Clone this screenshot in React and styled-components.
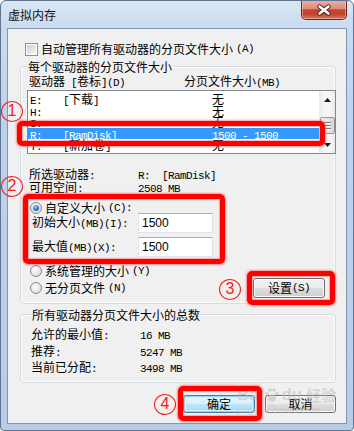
import React from 'react';
import styled, { createGlobalStyle, css } from 'styled-components';

const GlobalStyle = createGlobalStyle`
  html, body {
    margin: 0;
    padding: 0;
    background: #ffffff;
  }
  body {
    font-family: "Noto Sans CJK SC", "Noto Sans", sans-serif;
    font-size: 12px;
    color: #000;
  }
`;

// ---- window chrome ----
const Window = styled.div`
  position: relative;
  width: 354px;
  height: 431px;
  box-sizing: border-box;
  border: 1px solid #5f7591;
  border-radius: 6px 6px 4px 4px;
  padding: 0 6px 6px 6px;
  display: flex;
  flex-direction: column;
  overflow: hidden;
  background: linear-gradient(180deg, #d9e6f3 0px, #c9dbef 26px, #bed2ea 120px, #b7cde7 100%);
`;

const TitleBar = styled.div`
  height: 27px;
  display: flex;
  justify-content: space-between;
  align-items: flex-start;
  flex-shrink: 0;
`;

const TitleText = styled.div`
  margin: 7px 0 0 1px;
  line-height: 14px;
  font-size: 12px;
  color: #111;
`;

const CloseButton = styled.div`
  width: 46px;
  height: 20px;
  margin-top: -1px;
  box-sizing: border-box;
  border: 1px solid #6e2a20;
  border-top: none;
  border-radius: 0 0 5px 5px;
  display: flex;
  align-items: center;
  justify-content: center;
  background: linear-gradient(180deg, #eab1a4 0%, #dd8c7b 45%, #c7432c 52%, #c4442d 75%, #d8775f 100%);
  box-shadow: inset 0 0 0 1px rgba(255, 220, 210, 0.45);
`;

const Client = styled.div`
  flex: 1;
  box-sizing: border-box;
  border: 1px solid #8296b2;
  background: #f0f0f0;
  padding: 0 10px 0 12px;
  display: flex;
  flex-direction: column;
`;

// ---- text helpers (latin runs get the narrow fixed-width face) ----
const Mono = styled.span`
  font-family: "Liberation Mono", "DejaVu Sans Mono", monospace;
  font-size: 11px;
  letter-spacing: -0.6px;
  white-space: pre;
`;

const Txt = ({ children }) =>
  String(children)
    .split(/([\x20-\x7e]+)/)
    .filter(Boolean)
    .map((part, i) => (/^[\x20-\x7e]+$/.test(part) ? <Mono key={i}>{part}</Mono> : <span key={i}>{part}</span>));

// ---- controls ----
const CheckRow = styled.div`
  margin-top: 13px;
  height: 14px;
  display: flex;
  align-items: center;
  gap: 3px;
  padding-left: 5px;
  line-height: 14px;
`;

const CheckBox = styled.span`
  width: 13px;
  height: 13px;
  box-sizing: border-box;
  border: 1px solid #8e8f8f;
  box-shadow: inset 0 0 0 1px #fff;
  background: linear-gradient(135deg, #cdcdcd, #f7f7f7);
`;

const GroupBox = styled.fieldset`
  margin: ${({ $top }) => $top}px 0 0 0;
  padding: ${({ $pad }) => $pad};
  border: 1px solid #d5dbe0;
  border-radius: 3px;
  box-shadow: inset 0 0 0 1px rgba(255, 255, 255, 0.7);
  min-width: 0;
`;

const Legend = styled.legend`
  padding: 0 1px;
  line-height: 13px;
  font-size: 12px;
`;

const ColumnHeader = styled.div`
  display: grid;
  grid-template-columns: 155px 1fr;
  padding-left: 2px;
  height: 12px;
  line-height: 12px;
`;

const ListBox = styled.div`
  margin: 3px -1px 0 0;
  height: 64px;
  box-sizing: border-box;
  border: 1px solid #828790;
  background: #fff;
  display: flex;
`;

const ListRows = styled.div`
  flex: 1;
  padding-top: 2px;
  overflow: hidden;
`;

const ListRow = styled.div`
  display: grid;
  grid-template-columns: 33px 149px 1fr;
  height: 11.5px;
  line-height: 11.5px;
  padding-left: 2px;
  white-space: nowrap;
  ${({ $selected }) =>
    $selected &&
    css`
      background: #3399ff;
      color: #fff;
    `}
`;

const ScrollBar = styled.div`
  width: 16px;
  display: flex;
  flex-direction: column;
  align-items: center;
  background: linear-gradient(90deg, #e9e9e9, #f6f6f6 30%, #f6f6f6 70%, #e9e9e9);
`;

const ScrollArrow = styled.div`
  height: 17px;
  width: 16px;
  display: flex;
  align-items: center;
  justify-content: center;
`;

const ScrollThumb = styled.div`
  margin-top: 9px;
  width: 15px;
  height: 17px;
  box-sizing: border-box;
  border: 1px solid #959595;
  border-radius: 2px;
  background: linear-gradient(90deg, #f3f3f3, #e6e6e6 50%, #d6d6d6);
  display: flex;
  flex-direction: column;
  align-items: center;
  justify-content: center;
  gap: 2px;
  & > i {
    display: block;
    width: 7px;
    height: 1px;
    background: #7a7a7a;
    box-shadow: 0 1px 0 #fff;
  }
`;

const InfoGrid = styled.div`
  margin-top: ${({ $top }) => $top}px;
  display: grid;
  grid-template-columns: 109px auto;
  grid-auto-rows: ${({ $row }) => $row}px;
  align-items: center;
  padding-left: ${({ $left }) => $left}px;
  line-height: 12px;
`;

const RadioRow = styled.div`
  margin-top: ${({ $top }) => $top || 0}px;
  height: ${({ $h }) => $h || 14}px;
  display: flex;
  align-items: center;
  gap: 3px;
  padding-left: 3px;
  line-height: 12px;
`;

const Radio = styled.span`
  position: relative;
  width: 12px;
  height: 12px;
  box-sizing: border-box;
  border-radius: 50%;
  border: 1px solid #8a8a8a;
  background: radial-gradient(circle at 40% 35%, #ffffff 0%, #e4e4e4 60%, #cfcfcf 100%);
  ${({ $checked }) =>
    $checked &&
    css`
      &::after {
        content: '';
        position: absolute;
        inset: 2px;
        border-radius: 50%;
        background: radial-gradient(circle at 40% 35%, #a9dcff 0%, #3b8bd2 40%, #16457f 100%);
      }
    `}
`;

const InputRow = styled.div`
  margin-top: ${({ $top }) => $top}px;
  display: grid;
  grid-template-columns: 106px 75px;
  align-items: center;
  padding-left: 5px;
  height: 20px;
  line-height: 12px;
`;

const TextInput = styled.div`
  height: 20px;
  box-sizing: border-box;
  border: 1px solid #e2e3ea;
  border-top-color: #abadb3;
  background: #fff;
  padding-left: 3px;
  display: flex;
  align-items: center;
  font-family: "Liberation Sans", Arial, sans-serif;
  font-size: 12px;
`;

const BottomRow = styled.div`
  margin-top: 7px;
  display: flex;
  justify-content: space-between;
  align-items: flex-start;
`;

const RadioColumn = styled.div`
  display: flex;
  flex-direction: column;
  gap: 3px;
`;

const Button = styled.div`
  width: ${({ $w }) => $w}px;
  height: ${({ $h }) => $h}px;
  margin: ${({ $m }) => $m || 0};
  box-sizing: border-box;
  border: 1px solid #707070;
  border-radius: 3px;
  display: flex;
  align-items: center;
  justify-content: center;
  line-height: 12px;
  background: linear-gradient(180deg, #f2f2f2 0%, #ebebeb 48%, #dddddd 52%, #cfcfcf 100%);
  box-shadow: inset 0 0 0 1px #fbfbfb;
  ${({ $default }) =>
    $default &&
    css`
      border-color: #3c7fb1;
      background: linear-gradient(180deg, #eaf6fd 0%, #d9f0fc 48%, #bee6fd 52%, #a7d9f5 100%);
      box-shadow: inset 0 0 0 1px #8fd6f6, inset 0 0 0 2px #d8f2fc;
    `}
`;

const ButtonRow = styled.div`
  margin-top: 12px;
  display: flex;
  justify-content: flex-end;
  gap: 10px;
`;

// ---- annotation overlay ----
const Mark = styled.div`
  position: absolute;
  left: ${({ $x }) => $x}px;
  top: ${({ $y }) => $y}px;
  width: ${({ $w }) => $w}px;
  height: ${({ $h }) => $h}px;
  box-sizing: border-box;
  border: 5px solid #ff0000;
  border-radius: 5px;
  box-shadow: 0 0 2px 1px rgba(255, 60, 60, 0.55), inset 0 0 1px 1px rgba(255, 60, 60, 0.4);
  pointer-events: none;
`;

const Badge = styled.div`
  position: absolute;
  left: ${({ $x }) => $x}px;
  top: ${({ $y }) => $y}px;
  width: 22px;
  height: 21px;
  box-sizing: border-box;
  border: 1.5px solid #f21c1c;
  border-radius: 50%;
  color: #f21c1c;
  font-family: "Liberation Sans", Arial, sans-serif;
  font-size: 16px;
  line-height: 18px;
  text-align: center;
`;

const Watermark = styled.div`
  position: absolute;
  left: 236px;
  top: 385px;
  color: rgba(190, 190, 190, 0.55);
  font-family: "Liberation Sans", Arial, sans-serif;
  pointer-events: none;
  line-height: 1;
`;

const WatermarkTop = styled.div`
  display: flex;
  align-items: center;
  gap: 1px;
  font-size: 17px;
  font-weight: bold;
  & > span:last-child {
    font-family: "Noto Sans CJK SC", sans-serif;
    font-size: 15px;
    margin-left: 3px;
  }
`;

const WatermarkSub = styled.div`
  margin-top: 3px;
  font-size: 9px;
  letter-spacing: 0.6px;
`;

const drives = [
  { d: 'E:', label: '[下载]', size: '无' },
  { d: 'H:', label: '', size: '无' },
  { d: 'I:', label: '', size: '无' },
  { d: 'R:', label: '[RamDisk]', size: '1500 - 1500', selected: true },
  { d: 'T:', label: '[新加卷]', size: '无' },
];

const Arrow = ({ down }) => (
  <svg width="7" height="4" viewBox="0 0 7 4">
    <path d={down ? 'M0 0 H7 L3.5 4 Z' : 'M0 4 H7 L3.5 0 Z'} fill="#1e1e1e" />
  </svg>
);

const Paw = () => (
  <svg width="16" height="16" viewBox="0 0 16 16" fill="rgba(190,190,190,0.6)">
    <ellipse cx="8" cy="11" rx="4" ry="3.5" />
    <circle cx="3" cy="6.5" r="1.8" />
    <circle cx="6" cy="3" r="1.8" />
    <circle cx="10" cy="3" r="1.8" />
    <circle cx="13" cy="6.5" r="1.8" />
  </svg>
);

export default function App() {
  return (
    <>
      <GlobalStyle />
      <Window>
        <TitleBar>
          <TitleText>虚拟内存</TitleText>
          <CloseButton>
            <svg width="14" height="12" viewBox="-7 -6 14 12">
              <path d="M-4.5 -3.5 L4.5 3.5 M4.5 -3.5 L-4.5 3.5" stroke="#43201a" strokeWidth="4.4" strokeLinecap="round" />
              <path d="M-4.5 -3.5 L4.5 3.5 M4.5 -3.5 L-4.5 3.5" stroke="#ffffff" strokeWidth="2.6" strokeLinecap="round" />
            </svg>
          </CloseButton>
        </TitleBar>

        <Client>
          <CheckRow>
            <CheckBox />
            <Txt>自动管理所有驱动器的分页文件大小(A)</Txt>
          </CheckRow>

          <GroupBox $top={4} $pad="2px 0 5px 6px">
            <Legend>每个驱动器的分页文件大小</Legend>
            <ColumnHeader>
              <span><Txt>驱动器 [卷标](D)</Txt></span>
              <span><Txt>分页文件大小(MB)</Txt></span>
            </ColumnHeader>
            <ListBox>
              <ListRows>
                {drives.map((r) => (
                  <ListRow key={r.d} $selected={r.selected}>
                    <span><Txt>{r.d}</Txt></span>
                    <span>{r.label ? <Txt>{r.label}</Txt> : null}</span>
                    <span><Txt>{r.size}</Txt></span>
                  </ListRow>
                ))}
              </ListRows>
              <ScrollBar>
                <ScrollArrow><Arrow /></ScrollArrow>
                <ScrollThumb><i /><i /><i /></ScrollThumb>
                <ScrollArrow style={{ marginTop: 'auto' }}><Arrow down /></ScrollArrow>
              </ScrollBar>
            </ListBox>

            <InfoGrid $top={14} $row={13} $left={2}>
              <span><Txt>所选驱动器:</Txt></span>
              <span><Txt>R:  [RamDisk]</Txt></span>
              <span><Txt>可用空间:</Txt></span>
              <span><Txt>2508 MB</Txt></span>
            </InfoGrid>

            <RadioRow $top={8} $h={12}>
              <Radio $checked />
              <Txt>自定义大小(C):</Txt>
            </RadioRow>
            <InputRow $top={-1}>
              <span><Txt>初始大小(MB)(I):</Txt></span>
              <TextInput>1500</TextInput>
            </InputRow>
            <InputRow $top={4}>
              <span><Txt>最大值(MB)(X):</Txt></span>
              <TextInput>1500</TextInput>
            </InputRow>

            <BottomRow>
              <RadioColumn>
                <RadioRow>
                  <Radio />
                  <Txt>系统管理的大小(Y)</Txt>
                </RadioRow>
                <RadioRow>
                  <Radio />
                  <Txt>无分页文件(N)</Txt>
                </RadioRow>
              </RadioColumn>
              <Button $w={72} $h={20} $m="14px 10px 0 0"><Txt>设置(S)</Txt></Button>
            </BottomRow>
          </GroupBox>

          <GroupBox $top={4} $pad="6px 0 5px 10px">
            <Legend>所有驱动器分页文件大小的总数</Legend>
            <InfoGrid $top={0} $row={16.5} $left={0}>
              <span><Txt>允许的最小值:</Txt></span>
              <span><Txt>16 MB</Txt></span>
              <span><Txt>推荐:</Txt></span>
              <span><Txt>5247 MB</Txt></span>
              <span><Txt>当前已分配:</Txt></span>
              <span><Txt>3498 MB</Txt></span>
            </InfoGrid>
          </GroupBox>

          <ButtonRow>
            <Button $w={72} $h={18} $default>确定</Button>
            <Button $w={71} $h={18}>取消</Button>
          </ButtonRow>
        </Client>

        <Watermark>
          <WatermarkTop>
            <span>Bai</span>
            <Paw />
            <span>du</span>
            <span>经验</span>
          </WatermarkTop>
          <WatermarkSub>jingyan.baidu.com</WatermarkSub>
        </Watermark>

        <Mark $x={16} $y={120} $w={308} $h={25} />
        <Mark $x={22} $y={193} $w={202} $h={70} />
        <Mark $x={246} $y={270} $w={88} $h={34} />
        <Mark $x={177} $y={385} $w={84} $h={35} />

        <Badge $x={0} $y={100}>1</Badge>
        <Badge $x={0} $y={175}>2</Badge>
        <Badge $x={218} $y={278}>3</Badge>
        <Badge $x={153} $y={393}>4</Badge>
      </Window>
    </>
  );
}
